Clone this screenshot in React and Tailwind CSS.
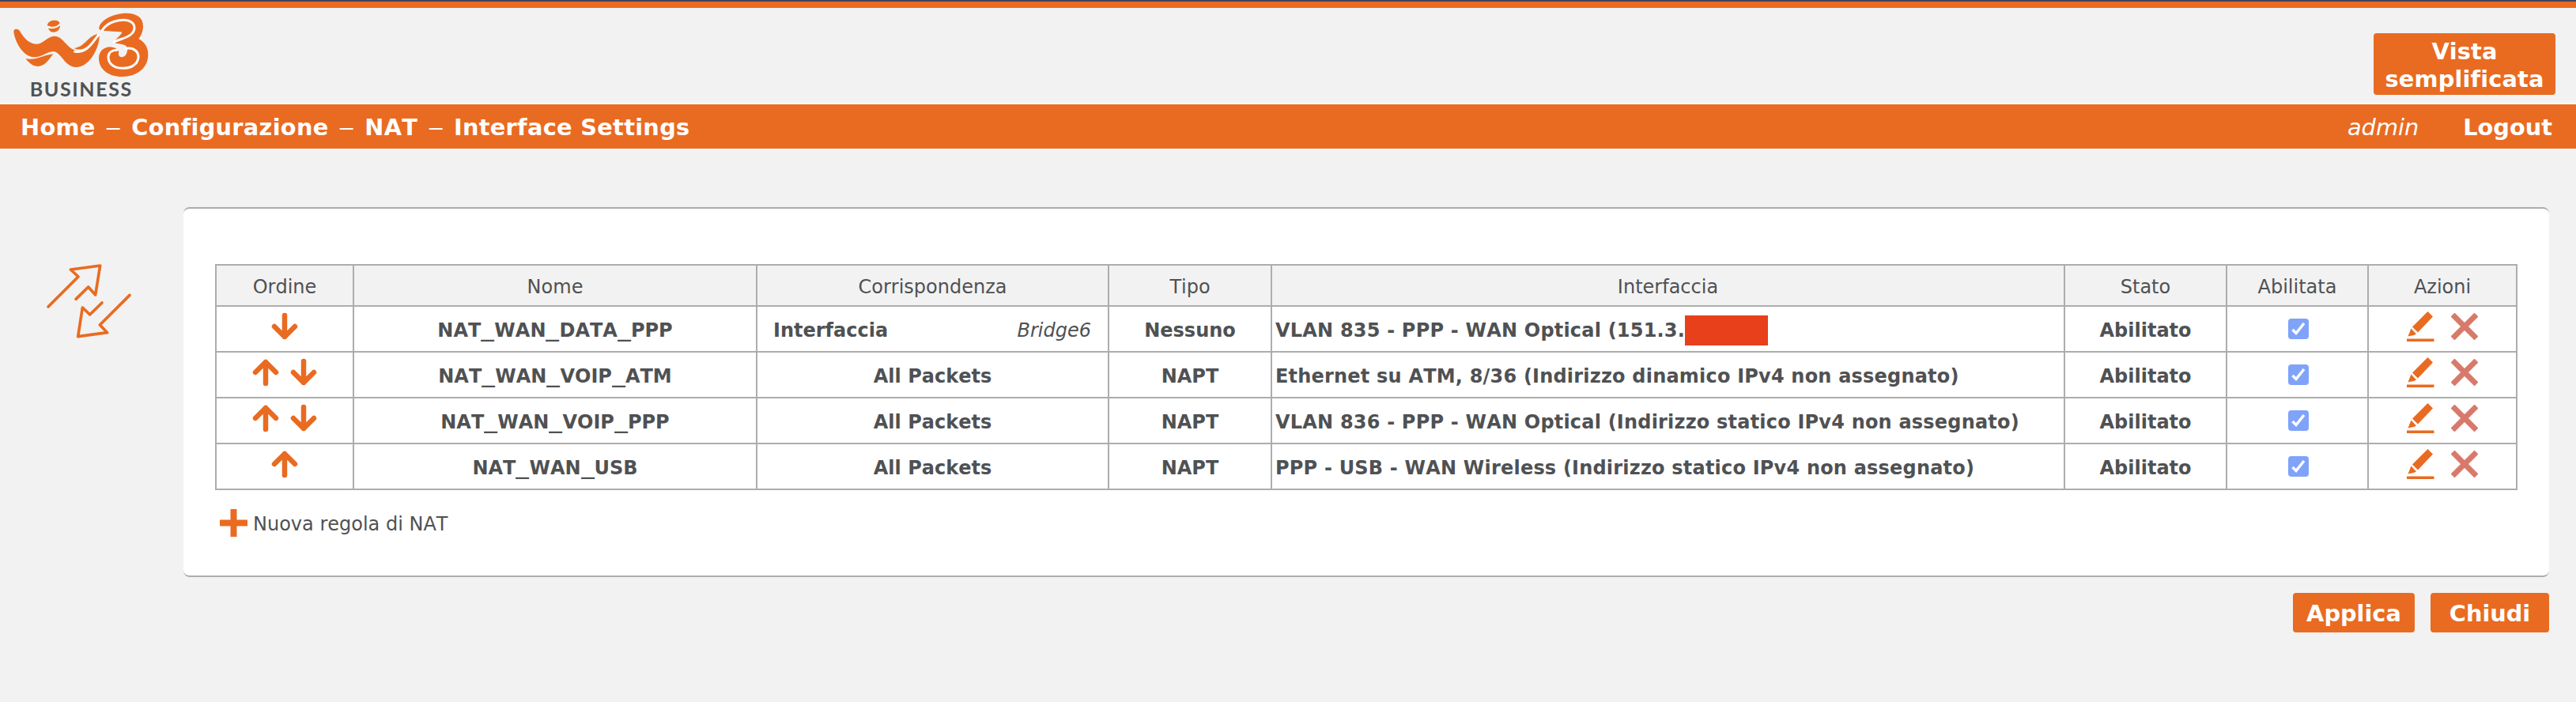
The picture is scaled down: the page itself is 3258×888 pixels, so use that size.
import React from 'react';

const ORANGE = '#e96b21';

const COLUMNS = [
  { label: 'Ordine', width: 'w-[174px]' },
  { label: 'Nome', width: 'w-[510px]' },
  { label: 'Corrispondenza', width: 'w-[445px]' },
  { label: 'Tipo', width: 'w-[206px]' },
  { label: 'Interfaccia', width: 'w-[1003px]' },
  { label: 'Stato', width: 'w-[205px]' },
  { label: 'Abilitata', width: 'w-[179px]' },
  { label: 'Azioni', width: 'w-[188px]' },
];

const RULES = [
  {
    name: 'NAT_WAN_DATA_PPP',
    down: true,
    bridge: 'Bridge6',
    type: 'Nessuno',
    iface: 'VLAN 835 - PPP - WAN Optical (151.3.',
    hidden: true,
  },
  {
    name: 'NAT_WAN_VOIP_ATM',
    up: true,
    down: true,
    type: 'NAPT',
    iface: 'Ethernet su ATM, 8/36 (Indirizzo dinamico IPv4 non assegnato)',
  },
  {
    name: 'NAT_WAN_VOIP_PPP',
    up: true,
    down: true,
    type: 'NAPT',
    iface: 'VLAN 836 - PPP - WAN Optical (Indirizzo statico IPv4 non assegnato)',
  },
  {
    name: 'NAT_WAN_USB',
    up: true,
    type: 'NAPT',
    iface: 'PPP - USB - WAN Wireless (Indirizzo statico IPv4 non assegnato)',
  },
];

const Logo = () => (
  <svg width="180" height="110" viewBox="48 48 540 330" className="block">
    <g fill={ORANGE}>
      {/* W */}
      <path d="M52 122C50 108 68 106 76 119C92 146 112 167 140 167C166 166 178 138 207 137C244 138 254 192 300 193C338 190 352 152 377 131C380 172 344 255 288 255C245 253 232 198 203 195C176 196 160 218 128 217C84 212 58 158 52 122Z" />
      <path d="M97 223C138 230 160 210 202 205C184 228 170 252 143 252C122 251 110 237 97 223Z" />
      <path d="M281 183C322 178 332 138 370 129C358 158 322 202 281 183Z" />
      {/* dot over the W */}
      <path d="M179 96C182 82 194 77 207 77C220 77 227 82 226 89C212 104 196 104 179 96Z" />
      <path d="M183 107C200 111 216 108 228 97C228 112 218 122 204 122C193 122 186 116 183 107Z" />
      {/* 3 */}
      <path d="M376 110C374 78 430 50 478 50C520 50 543 68 543 98C543 118 536 134 526 147C550 160 562 180 562 208C562 258 520 291 464 291C408 291 375 260 375 222C375 194 394 178 420 178C432 178 440 182 446 188L430 160L462 122L386 117Z" />
    </g>
    <path fill="#f2f2f2" d="M384 116C410 120 438 118 463 122C456 138 440 146 429 160C446 170 484 164 484 186C482 200 480 214 462 217C450 216 448 206 451 196C446 184 430 178 418 178L380 150Z" />
    <g fill="none" stroke="#fff" strokeLinecap="round">
      <path strokeWidth="9" d="M284 196C334 200 350 160 374 133" />
      <path strokeWidth="9" d="M388 115C410 80 460 72 486 78C518 88 516 118 492 134C474 148 450 148 432 160" />
      <path strokeWidth="9" d="M480 184C508 180 526 196 525 218C522 248 492 260 462 259C430 258 410 240 411 214C412 200 424 190 444 190" />
    </g>
    <text x="113" y="366" textLength="386" fontSize="75" className="fill-[#505254] font-[Lato] font-bold">BUSINESS</text>
  </svg>
);

const TransferIcon = () => (
  <svg width="110" height="98" viewBox="0 0 330 294" fill="none" stroke={ORANGE} strokeWidth="11" strokeLinecap="round" strokeLinejoin="round">
    <path d="M12 168L126 54L97 27L209 12L191 123L164 93L117 139" />
    <path d="M321 124L208 237L236 266L125 281L142 171L170 198L216 153" />
  </svg>
);

const Arrow = ({ up }) => (
  <svg width="48" height="36" viewBox="0 0 48 36" className={up ? 'rotate-180' : ''} fill="none" stroke={ORANGE} strokeWidth="6.500" strokeLinecap="round" strokeLinejoin="round">
    <path d="M24 4V31M11 18L24 31L37 18" />
  </svg>
);

const PencilIcon = () => (
  <svg width="35" height="38" viewBox="0 0 35 38">
    <path fill={ORANGE} d="M26.500 0L33 6.500L14 26.500L7 19.500Z" />
    <path fill={ORANGE} d="M5.500 21.500L12 28.500L9 30L1.500 31.500Z" />
    <path fill={ORANGE} d="M0 34.500H34.500V38H0Z" />
  </svg>
);

const DeleteIcon = () => (
  <svg width="34" height="34" viewBox="0 0 34 34" stroke="#d87a6b" strokeWidth="7">
    <path d="M2 2L32 32M32 2L2 32" />
  </svg>
);

const Checkbox = () => (
  <svg width="26" height="26" viewBox="0 0 26 26" className="mx-auto block">
    <rect width="26" height="26" rx="4" fill="#80a3fa" />
    <path d="M5.500 14L10 18.500L20 6" fill="none" stroke="#fff" strokeWidth="3.500" />
  </svg>
);

const Button = ({ children, className }) => (
  <button className={`rounded bg-[#e96b21] pt-[3px] text-center text-[28.8px] font-bold text-white ${className}`}>
    {children}
  </button>
);

const Separator = () => <span className="mx-[15.5px] inline-block scale-x-[1.45] font-normal">–</span>;

// the underscores of rule names are drawn wider than the font has them
const RuleName = ({ name }) =>
  name.split('_').map((part, i) => (
    <React.Fragment key={i}>
      {i > 0 && (
        <span className="inline-block w-[17px] text-left">
          <span className="inline-block origin-left scale-x-[1.42]">_</span>
        </span>
      )}
      {part}
    </React.Fragment>
  ));

const Cell = ({ children, className = '' }) => (
  <td className={`border-2 border-[#adadad] ${className}`}>{children}</td>
);

const RuleRow = ({ rule }) => (
  <tr className="h-[58px] font-bold">
    <Cell>
      <div className="mb-[6px] flex justify-center">
        {rule.up && <Arrow up />}
        {rule.down && <Arrow />}
      </div>
    </Cell>
    <Cell className="pt-[3px] text-center">
      <RuleName name={rule.name} />
    </Cell>
    <Cell className="pt-[3px] text-center">
      {rule.bridge ? (
        <div className="flex justify-between pr-[21px] pl-5">
          <span>Interfaccia</span>
          <span className="font-normal italic">{rule.bridge}</span>
        </div>
      ) : (
        'All Packets'
      )}
    </Cell>
    <Cell className="pt-[3px] text-center">{rule.type}</Cell>
    <Cell className="pt-[3px] pl-1">
      <div className="flex items-center tracking-[0.2px] whitespace-pre">
        {rule.iface}
        {rule.hidden && <span className="h-[38px] w-[105px] bg-[#e7401b]" />}
      </div>
    </Cell>
    <Cell className="pt-[3px] text-center">Abilitato</Cell>
    <Cell className="pl-[2px]">
      <Checkbox />
    </Cell>
    <Cell>
      <div className="mb-[6px] flex items-center justify-center gap-[21px]">
        <PencilIcon />
        <DeleteIcon />
      </div>
    </Cell>
  </tr>
);

export default function App() {
  return (
    <div className="flex h-[888px] w-[3258px] flex-col overflow-hidden bg-[#f2f2f2] font-['DejaVu_Sans',sans-serif] text-2xl text-[#4f5153] [font-kerning:none]">
      <header className="h-[132px] border-b-2 border-white">
        <div className="h-[10px] border-t-2 border-[#3b4467] bg-[#e96b21]" />
        <div className="flex justify-between">
          <div className="pt-[6px] pl-[16px]">
            <Logo />
          </div>
          <Button className="mt-8 mr-[26px] h-[78px] w-[230px] leading-[35px] tracking-[0.15px]">
            Vista
            <br />
            semplificata
          </Button>
        </div>
      </header>

      <nav className="flex h-[58px] items-center justify-between border-b-2 border-white bg-[#e96b21] pt-[2px] pr-[30px] pl-[26px] text-[28.8px] font-bold text-white">
        <div className="tracking-[0.3px]">
          Home
          <Separator />
          Configurazione
          <Separator />
          NAT
          <Separator />
          Interface Settings
        </div>
        <div className="flex gap-[56px]">
          <span className="font-normal italic">admin</span>
          <span>Logout</span>
        </div>
      </nav>

      <main className="mt-[72px] flex">
        <div className="w-[232px] pt-[70px] pl-[57px]">
          <TransferIcon />
        </div>
        <section className="h-[468px] w-[2992px] rounded-lg border-y-2 border-[#adadad] bg-white px-10 pt-[70px]">
          <table className="w-[2912px] table-fixed border-collapse">
            <thead>
              <tr className="h-[52px] bg-[#f2f2f2]">
                {COLUMNS.map((col) => (
                  <th key={col.label} className={`border-2 border-[#adadad] pt-[3px] font-normal ${col.width}`}>
                    {col.label}
                  </th>
                ))}
              </tr>
            </thead>
            <tbody>
              {RULES.map((rule) => (
                <RuleRow key={rule.name} rule={rule} />
              ))}
            </tbody>
          </table>
          <div className="mt-6 flex items-center pl-[6px]">
            <svg width="35" height="35" viewBox="0 0 35 35" stroke={ORANGE} strokeWidth="8">
              <path d="M17.500 0V35M0 17.500H35" />
            </svg>
            <span className="mt-[2px] ml-[7px]">Nuova regola di NAT</span>
          </div>
        </section>
      </main>

      <footer className="mt-5 flex justify-end gap-5 pr-[34px]">
        <Button className="h-[50px] w-[154px]">Applica</Button>
        <Button className="h-[50px] w-[150px]">Chiudi</Button>
      </footer>
    </div>
  );
}
